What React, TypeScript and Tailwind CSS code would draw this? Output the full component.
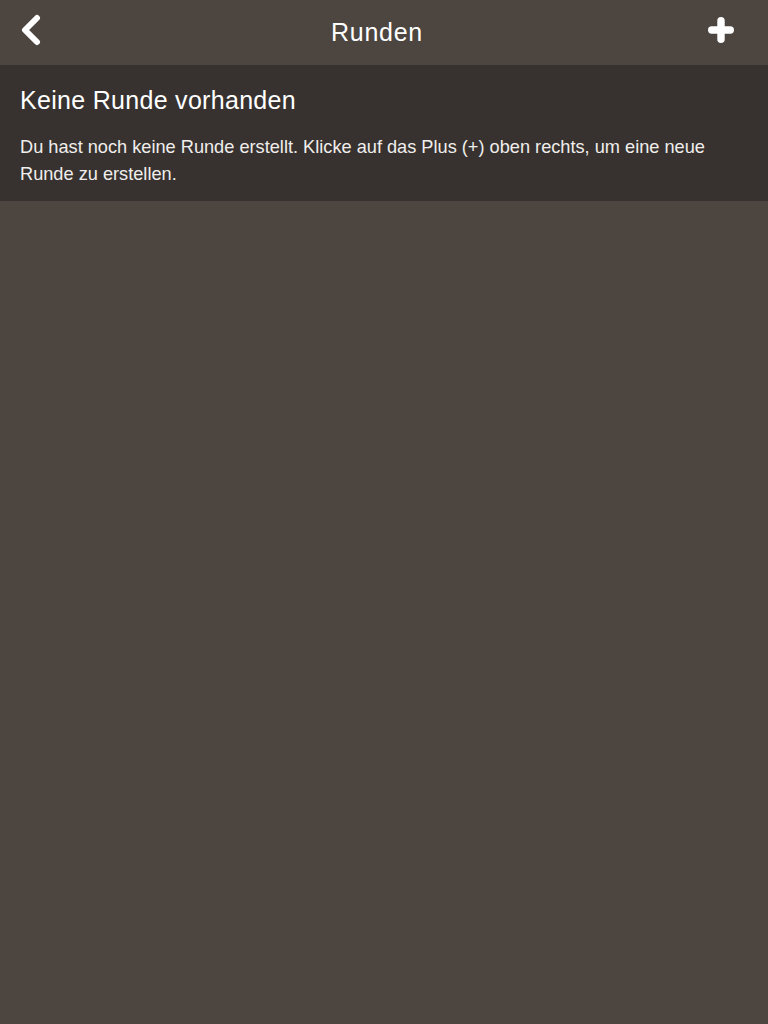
export default function App() {
  return (
    <div
      className="min-h-[1024px] w-full bg-[#4c4540] text-white"
      style={{ fontFamily: '"Liberation Sans", Arial, sans-serif' }}
    >
      {/* Navigation header */}
      <header className="flex h-[65px] items-center justify-between px-[20px]">
        <button className="mb-[5px] flex h-[40px] w-[40px] items-center justify-start">
          <svg width="22" height="32" viewBox="0 0 22 32" fill="none">
            <path
              d="M17 4 L5 16 L17 28"
              stroke="white"
              strokeWidth="6"
              strokeLinecap="round"
              strokeLinejoin="round"
            />
          </svg>
        </button>
        <h1 className="pr-[14px] text-[25px] leading-none tracking-[0.7px]">Runden</h1>
        <button className="mb-[5px] flex h-[40px] w-[40px] items-center justify-end pr-[14px]">
          <svg width="28" height="28" viewBox="0 0 28 28" fill="none">
            <path
              d="M14 4 V24 M4 14 H24"
              stroke="white"
              strokeWidth="8"
              strokeLinecap="round"
            />
          </svg>
        </button>
      </header>

      {/* Empty state */}
      <section className="bg-[#37322f] px-[20px] pb-[13px] pt-[20px]">
        <h2 className="text-[25px] leading-[30px] tracking-[0.3px]">Keine Runde vorhanden</h2>
        <p className="mt-[19px] pr-[20px] text-[18.2px] leading-[27px] text-[#f0eeec]">
          Du hast noch keine Runde erstellt. Klicke auf das Plus (+) oben rechts, um eine neue Runde zu erstellen.
        </p>
      </section>
    </div>
  );
}
